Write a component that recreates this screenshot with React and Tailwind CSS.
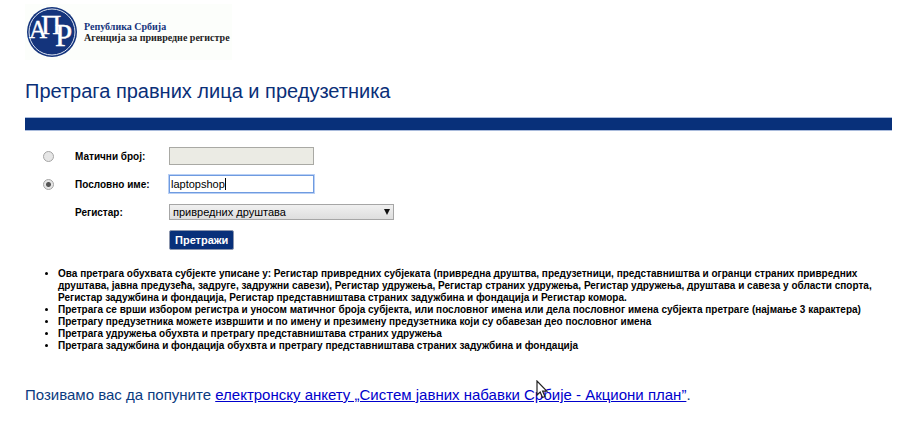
import { useState } from 'react';

// ── Data ──────────────────────────────────────────────────────────────────────

const REGISTERS = [
  'привредних друштава',
  'предузетника',
  'удружења',
  'страних удружења',
  'задужбина и фондација',
];

const NOTES = [
  'Ова претрага обухвата субјекте уписане у: Регистар привредних субјеката (привредна друштва, предузетници, представништва и огранци страних привредних друштава, јавна предузећа, задруге, задружни савези), Регистар удружења, Регистар страних удружења, Регистар удружења, друштава и савеза у области спорта, Регистар задужбина и фондација, Регистар представништава страних задужбина и фондација и Регистар комора.',
  'Претрага се врши избором регистра и уносом матичног броја субјекта, или пословног имена или дела пословног имена субјекта претраге (најмање 3 карактера)',
  'Претрагу предузетника можете извршити и по имену и презимену предузетника који су обавезан део пословног имена',
  'Претрага удружења обухвта и претрагу представништава страних удружења',
  'Претрага задужбина и фондација обухвта и претрагу представништава страних задужбина и фондација',
];

// ── Sub-components ────────────────────────────────────────────────────────────

function Logo() {
  return (
    <svg viewBox="0 0 52 52" className="w-[52px] h-[52px] shrink-0" aria-hidden="true">
      <circle cx="26" cy="26" r="25" fill="#14347c" />
      <circle cx="26" cy="26" r="23" fill="none" stroke="#dfe6f2" strokeWidth="1" />
      <g fill="#fff" stroke="#fff" strokeWidth="0.4" fontFamily="Liberation Serif, serif" fontWeight="400">
        <text x="3" y="32" fontSize="25">А</text>
        <text x="15" y="28" fontSize="28">П</text>
        <text x="29" y="40" fontSize="31">Р</text>
      </g>
    </svg>
  );
}

function Radio({ id, label, checked, onChange }) {
  return (
    <input
      type="radio"
      name="mode"
      id={id}
      aria-label={label}
      checked={checked}
      onChange={onChange}
      className="appearance-none ml-[18px] w-[11px] h-[11px] rounded-full border border-[#a5a5a5] bg-[#e6e6e6] checked:bg-[radial-gradient(circle,#555_0_2px,#e6e6e6_3px)]"
    />
  );
}

function Pointer() {
  return (
    <svg viewBox="0 0 12 19" className="absolute left-[511px] -top-[5px] w-3 h-[19px] pointer-events-none" aria-hidden="true">
      <path d="M1 1v14l3.2-3 2.3 5.5 2.4-1-2.3-5.3h4.2z" fill="#fff" stroke="#222" strokeWidth="1.2" />
    </svg>
  );
}

// ── Page ──────────────────────────────────────────────────────────────────────

export default function App() {
  const [mode, setMode] = useState('name');
  const [number, setNumber] = useState('');
  const [name, setName] = useState('laptopshop');
  const [register, setRegister] = useState(REGISTERS[0]);

  return (
    <main className="bg-white pl-[25px] pr-2 pt-1 font-['Liberation_Sans',sans-serif] text-black">

      {/* Header */}
      <header className="flex items-center gap-[6px] w-[207px] h-14 pl-px bg-[#fcfefb] font-['Liberation_Serif',serif] text-[10px] leading-[11px] font-bold whitespace-nowrap">
        <Logo />
        <div>
          <p className="text-[#14347c]">Република Србија</p>
          <p className="text-[#222]">Агенција за привредне регистре</p>
        </div>
      </header>

      <h1 className="mt-[19px] text-[20px] leading-6 text-[#0a2f78]">Претрага правних лица и предузетника</h1>
      <div className="mt-[14px] h-[14px] bg-[#08307a] border-y border-[#a9bbdc]" />

      {/* Search form */}
      <form
        onSubmit={e => e.preventDefault()}
        className="mt-[11px] grid grid-cols-[50px_94px_1fr] auto-rows-[28px] items-center text-[10px]"
      >
        <Radio id="by-number" label="Матични број" checked={mode === 'number'} onChange={() => setMode('number')} />
        <label htmlFor="number" className="font-bold">Матични број:</label>
        <input
          id="number"
          value={number}
          disabled={mode !== 'number'}
          onChange={e => setNumber(e.target.value)}
          className="w-[145px] h-[18px] px-px border border-[#a9a9a4] bg-[#ebebe4] text-[11px]"
        />

        <Radio id="by-name" label="Пословно име" checked={mode === 'name'} onChange={() => setMode('name')} />
        <label htmlFor="name" className="font-bold">Пословно име:</label>
        <div className="relative flex">
          <input
            id="name"
            value={name}
            onChange={e => setName(e.target.value)}
            className="w-[145px] h-[18px] px-px border border-[#6f9be0] outline outline-[#b9d0f5] text-[11px]"
          />
          <span className="absolute left-14 top-[3px] w-px h-3 bg-black" />
        </div>

        <label htmlFor="register" className="col-start-2 font-bold">Регистар:</label>
        <div className="relative flex w-[225px]">
          <select
            id="register"
            value={register}
            onChange={e => setRegister(e.target.value)}
            className="appearance-none w-full h-4 pl-[3px] border border-[#a6a6a6] bg-linear-to-b from-[#f0f0f0] to-[#dedede] text-[11px] leading-[14px]"
          >
            {REGISTERS.map(r => <option key={r}>{r}</option>)}
          </select>
          <svg viewBox="0 0 6 6" className="absolute right-1 top-[5px] w-1.5 h-1.5 pointer-events-none" aria-hidden="true">
            <path d="M0 0h6L3 6z" fill="#111" />
          </svg>
        </div>

        <button
          type="submit"
          className="col-start-3 justify-self-start h-5 px-[5px] rounded-xs border border-[#8c96ad] bg-[#08307a] text-white font-bold text-[11px] leading-4"
        >
          Претражи
        </button>
      </form>

      {/* Notes */}
      <ul className="mt-[14px] pl-[33px] pr-4 list-disc text-[10px] leading-3 font-bold">
        {NOTES.map(note => <li key={note}>{note}</li>)}
      </ul>

      {/* Survey */}
      <p className="relative mt-[33px] pb-4 text-[15px] leading-5 text-[#0a3a80]">
        Позивамо вас да попуните{' '}
        <a href="#anketa" className="text-[#0000cc] underline">
          електронску анкету „Систем јавних набавки Србије - Акциони план”
        </a>.
        <Pointer />
      </p>

    </main>
  );
}
